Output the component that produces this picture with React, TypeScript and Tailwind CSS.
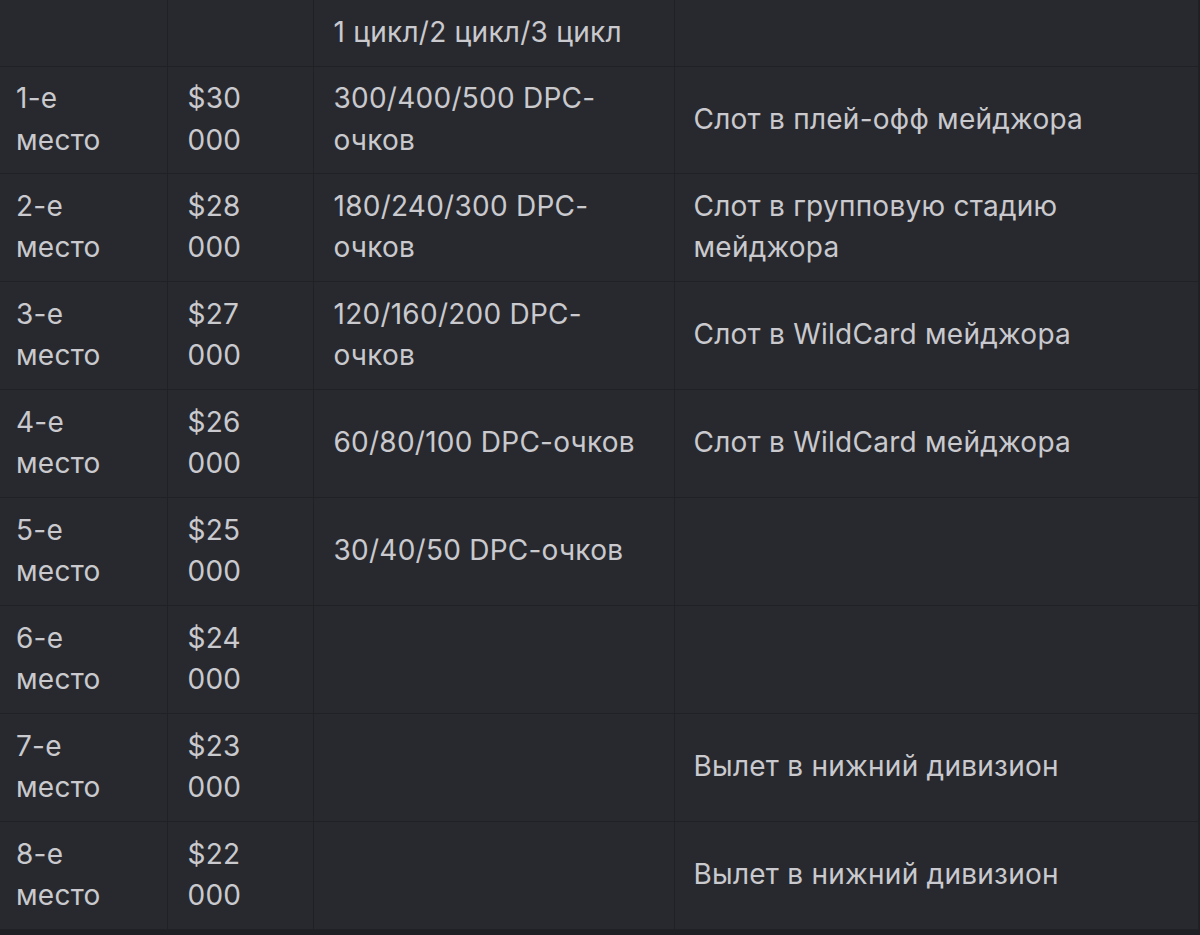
import React from "react";

const rows: [string[], string[], string[], string[]][] = [
  [["1-е", "место"], ["$30", "000"], ["300/400/500 DPC-", "очков"], ["Слот в плей-офф мейджора"]],
  [["2-е", "место"], ["$28", "000"], ["180/240/300 DPC-", "очков"], ["Слот в групповую стадию", "мейджора"]],
  [["3-е", "место"], ["$27", "000"], ["120/160/200 DPC-", "очков"], ["Слот в WildCard мейджора"]],
  [["4-е", "место"], ["$26", "000"], ["60/80/100 DPC-очков"], ["Слот в WildCard мейджора"]],
  [["5-е", "место"], ["$25", "000"], ["30/40/50 DPC-очков"], []],
  [["6-е", "место"], ["$24", "000"], [], []],
  [["7-е", "место"], ["$23", "000"], [], ["Вылет в нижний дивизион"]],
  [["8-е", "место"], ["$22", "000"], [], ["Вылет в нижний дивизион"]],
];

const base =
  "border-r border-b border-[#202125] align-middle py-0 pr-[10px] leading-[41.5px] whitespace-nowrap overflow-hidden";
const pads = ["pl-[16px]", "pl-[20px]", "pl-[20px]", "pl-[19px]"];

function Lines({ lines }: { lines: string[] }) {
  return (
    <>
      {lines.map((l, i) => (
        <span key={i} className="block">
          {l}
        </span>
      ))}
    </>
  );
}

export default function App() {
  return (
    <div className="w-[1200px] h-[935px] bg-[#1f2024] overflow-hidden">
      <table
        className="w-[1199px] border-collapse bg-[#28292e] text-[#c9c9ce] text-[28px] tracking-[0.25px] table-fixed"
        style={{ fontFamily: "Inter, 'Noto Sans', sans-serif" }}
      >
        <colgroup>
          <col className="w-[167px]" />
          <col className="w-[146px]" />
          <col className="w-[361px]" />
          <col />
        </colgroup>
        <tbody>
          <tr className="h-[66px]">
            <td className={base + " " + pads[0]}></td>
            <td className={base + " " + pads[1]}></td>
            <td className={base + " " + pads[2]}>1 цикл/2 цикл/3 цикл</td>
            <td className={base + " " + pads[3]}></td>
          </tr>
          {rows.map((r, i) => (
            <tr key={i} className={i === 0 ? "h-[107px]" : "h-[108px]"}>
              {r.map((c, j) => (
                <td key={j} className={base + " " + pads[j]}>
                  <Lines lines={c} />
                </td>
              ))}
            </tr>
          ))}
        </tbody>
      </table>
    </div>
  );
}
